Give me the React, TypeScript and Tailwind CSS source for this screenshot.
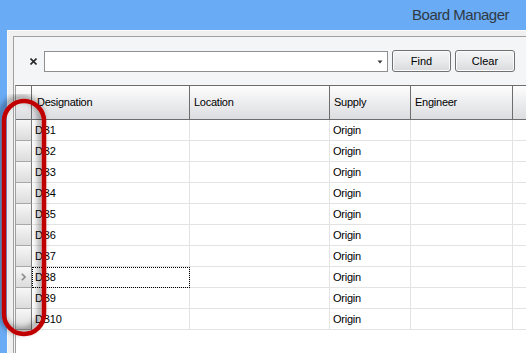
import React from 'react';

const columns = [
  { name: 'Designation', w: 'w-[158px]', pad: 'pl-[5px]' },
  { name: 'Location', w: 'w-[140px]', pad: 'pl-[4px]' },
  { name: 'Supply', w: 'w-[81px]', pad: 'pl-[4px]' },
  { name: 'Engineer', w: 'w-[102px]', pad: 'pl-[4px]' },
];

const rows = Array.from({ length: 10 }, (_, i) => ({
  designation: `DB${i + 1}`,
  location: '',
  supply: 'Origin',
  engineer: '',
}));

const SELECTED = 7;

function Button({ label, w }: { label: string; w: string }) {
  return (
    <button
      className={`${w} h-[22px] ml-[4px] rounded-[3px] border border-[#707070] bg-gradient-to-b from-[#f4f4f4] via-[#e9eaec] to-[#d8dadd] text-[11px] text-black shadow-[inset_0_0_0_1px_#fbfbfb]`}
    >
      {label}
    </button>
  );
}

function Toolbar() {
  return (
    <div className="flex items-center mt-[13px] h-[22px]">
      <svg className="ml-[16px] w-[7px] h-[7px]" viewBox="0 0 7 7">
        <path d="M0.5 0.5 L6.5 6.5 M6.5 0.5 L0.5 6.5" stroke="#2a2a2a" strokeWidth="1.6" />
      </svg>
      <div className="ml-[7px] w-[344px] h-[21px] self-end border border-[#8f8f8f] bg-white flex items-center justify-end pr-[4px]">
        <svg className="w-[6px] h-[4px]" viewBox="0 0 6 4">
          <path d="M0.5 0.5 L5.5 0.5 L3 3.5 Z" fill="#3a3a3a" />
        </svg>
      </div>
      <Button label="Find" w="w-[59px]" />
      <Button label="Clear" w="w-[60px]" />
    </div>
  );
}

function Grid() {
  return (
    <div className="mt-[13px] ml-[1px] flex-1 flex flex-col bg-white border-t border-l border-t-[#6d6d6d] border-l-[#a0a0a0] text-[11px] tracking-[-0.25px] text-black">
      <div className="flex h-[34px] border-b border-[#6d6d6d] bg-gradient-to-b from-[#fdfdfd] to-[#dcdde1]">
        <div className="w-[16px] border-r border-[#6d6d6d]" />
        {columns.map((c) => (
          <div key={c.name} className={`${c.w} ${c.pad} border-r border-[#6d6d6d] flex items-center`}>
            {c.name}
          </div>
        ))}
        <div className="flex-1" />
      </div>
      {rows.map((r, i) => (
        <div key={r.designation} className="flex h-[21px]">
          <div className="w-[16px] border-r border-b border-r-[#7a7a7a] border-b-[#a8a8a8] bg-gradient-to-b from-[#f7f7f7] to-[#dcdcdc] flex items-center justify-center">
            {i === SELECTED && (
              <svg className="w-[5px] h-[8px] ml-[-1px]" viewBox="0 0 5 8">
                <path d="M0.8 0.8 L4 4 L0.8 7.2" fill="none" stroke="#8a8a8a" strokeWidth="1.6" />
              </svg>
            )}
          </div>
          <div
            className={`w-[158px] pl-[3px] border-r border-b border-[#e3e3e3] flex items-center ${
              i === SELECTED ? 'outline-1 outline-dotted outline-black -outline-offset-1' : ''
            }`}
          >
            {r.designation}
          </div>
          <div className="w-[140px] pl-[3px] border-r border-b border-[#e3e3e3] flex items-center">{r.location}</div>
          <div className="w-[81px] pl-[3px] border-r border-b border-[#e3e3e3] flex items-center">{r.supply}</div>
          <div className="w-[102px] pl-[3px] border-r border-b border-[#e3e3e3] flex items-center">{r.engineer}</div>
          <div className="flex-1 border-b border-[#e3e3e3]" />
        </div>
      ))}
    </div>
  );
}

export default function App() {
  return (
    <div
      className="relative w-[526px] h-[353px] overflow-hidden bg-[#6aabf5] flex flex-col"
      style={{ fontFamily: '"Liberation Sans", Arial, sans-serif' }}
    >
      <div className="h-[30px] flex items-center justify-end pr-[17px] text-[15px] tracking-[-0.5px] text-[#2f3a44]">
        Board Manager
      </div>
      <div className="flex-1 ml-[7px] flex flex-col bg-[#f0f0f0] border-t border-l border-[#fafafa] pl-[5px] pt-[5px]">
        <div className="flex-1 flex flex-col bg-[#f4f5f7] border-t border-l border-[#a0a0a0] w-[560px]">
          <Toolbar />
          <Grid />
        </div>
      </div>

      {/* red annotation around the row headers */}
      <svg className="absolute left-0 top-[94px] w-[54px] h-[250px] pointer-events-none" viewBox="0 0 54 250">
        <defs>
          <filter id="shade" x="-30%" y="-10%" width="160%" height="120%">
            <feDropShadow dx="-3" dy="-3" stdDeviation="3" floodColor="#000" floodOpacity="0.5" />
          </filter>
        </defs>
        <rect x="4" y="7" width="40" height="233" rx="20" fill="none" stroke="#c00000" strokeWidth="4.5" filter="url(#shade)" />
      </svg>
    </div>
  );
}
